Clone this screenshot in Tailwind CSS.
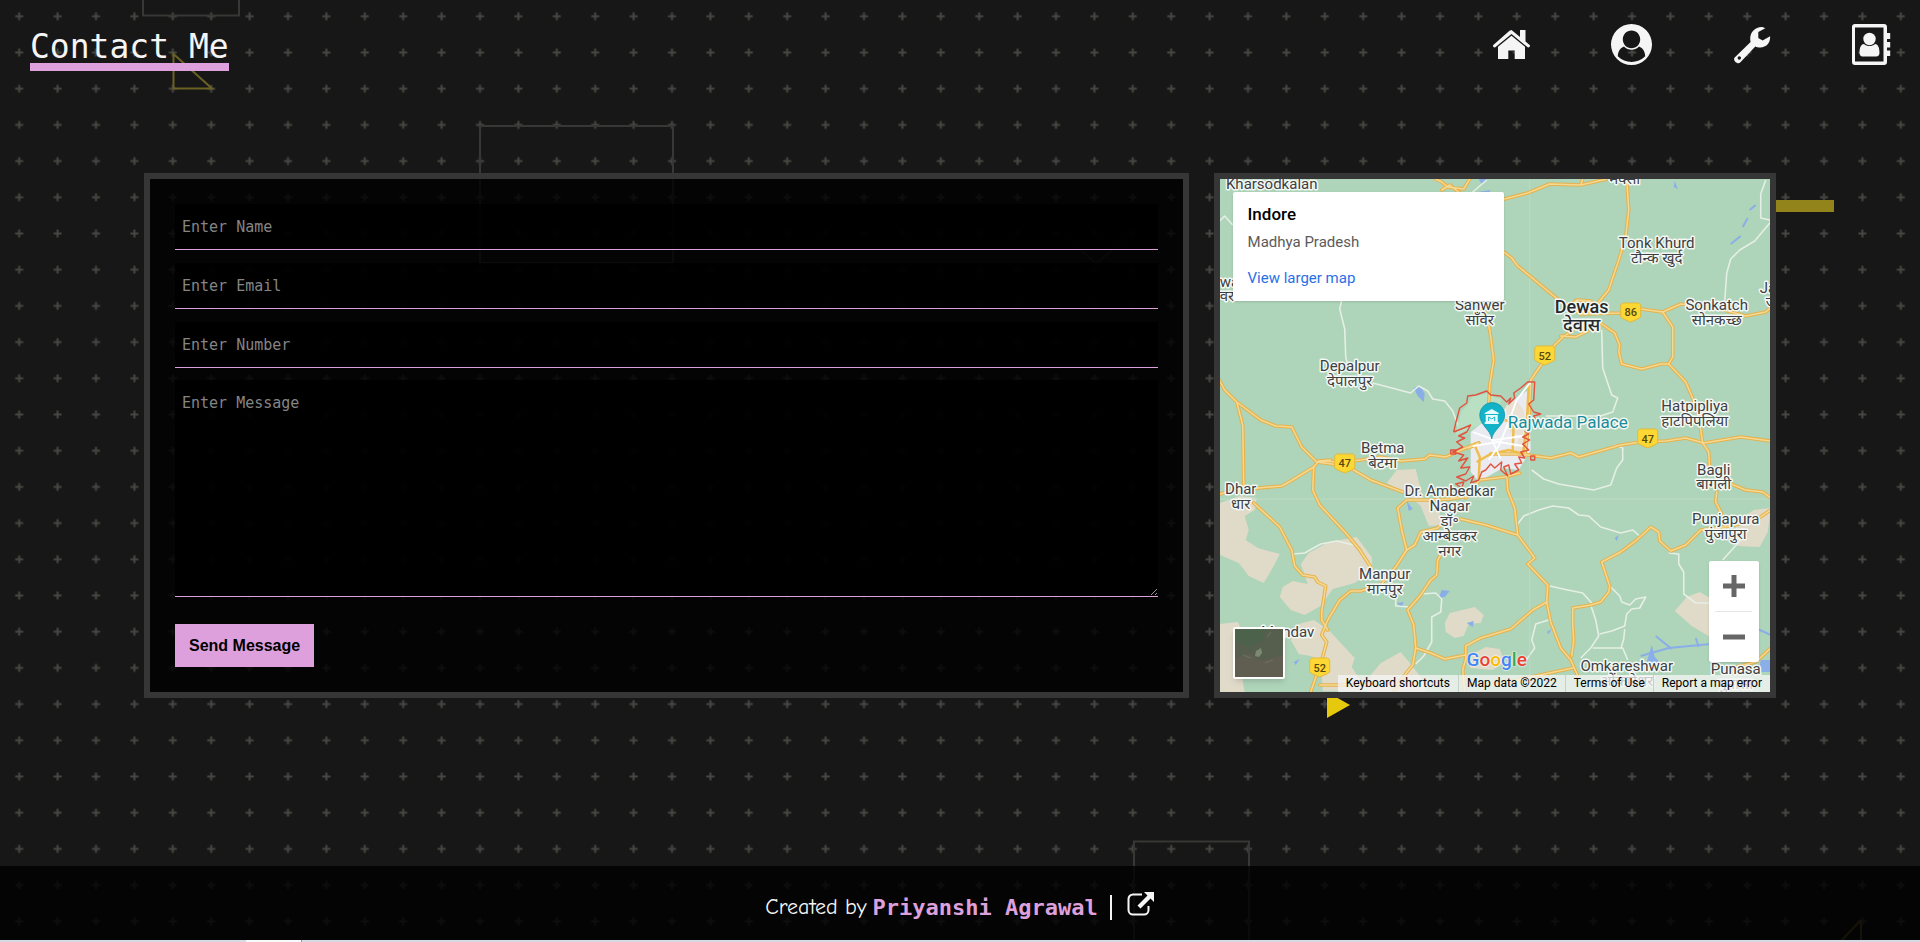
<!DOCTYPE html>
<html lang="en">
<head>
<meta charset="utf-8">
<meta name="viewport" content="width=device-width, initial-scale=1">
<title>Contact Me</title>
<script src="https://cdn.jsdelivr.net/npm/@tailwindcss/browser@4"></script>
</head>
<body class="relative flex min-h-screen flex-col overflow-x-hidden bg-[#171717] font-['DejaVu_Sans_Mono',monospace] text-[#f5f5f5]">

<!-- Page backdrop: plus grid with outlined shapes -->
<svg class="absolute inset-0 -z-10 h-full w-full" viewBox="0 0 1920 942" preserveAspectRatio="xMidYMid slice" aria-hidden="true">
  <defs>
    <pattern id="plus" x="0" y="-1.8" width="38.4" height="36.2" patternUnits="userSpaceOnUse">
      <path d="M15.2 18.1h8M19.2 14.1v8" stroke="#464642" stroke-width="2" fill="none"/>
    </pattern>
  </defs>
  <rect width="1920" height="942" fill="#171717"/>
  <rect width="1920" height="942" fill="url(#plus)"/>
  <g fill="none" stroke="#373735" stroke-width="2">
    <path d="M143 0v15.500h96V0"/>
    <path d="M480 263V126h193v137z"/>
    <path d="M1134 942V841.500h115V942"/>
    <path d="M1064 234l32 30 34-30" stroke="#2c2c2c"/>
  </g>
  <path d="M173.500 54v34.500H212z" fill="none" stroke="#6b6123" stroke-width="2"/>
  <path d="M1861 920v22M1861 920l-21 22" fill="none" stroke="#6b6123" stroke-width="2"/>
  <rect x="1700" y="200" width="134" height="12" fill="#93831b"/>
  <path d="M1327 692v26l23-13z" fill="#e6c90c"/>
</svg>

<header class="flex items-start justify-between pr-7 pl-[30px] pt-6">
  <h1 class="mt-[6px] border-b-8 border-[#dda0dd] text-[33px] leading-[33px]">Contact Me</h1>
  <nav class="flex h-[41px] items-center gap-[79px]" aria-label="Main">
    <a href="#home" aria-label="Home">
      <svg class="h-[41px] w-[41px]" viewBox="0 0 41 41" fill="#f5f5f5"><path d="M20.500 6 29 13V6h5.500v11.500l4.200 3.500c1 1-.8 3.200-2 2.300L20.500 10 4.300 23.300c-1.200.9-3-1.300-2-2.300L18.500 6.700z"/><path d="M20.500 11.700 34 22.800V35H23.700v-8.500h-6.400V35H7V22.800z"/></svg>
    </a>
    <a href="#about" aria-label="About">
      <svg class="h-[41px] w-[41px]" viewBox="0 0 41 41"><path fill="#f5f5f5" fill-rule="evenodd" d="M20.500 0a20.500 20.500 0 1 1 0 41 20.500 20.500 0 0 1 0-41zm0 6.500c-5 0-8.700 4-8.700 8.800 0 5 3.700 9 8.700 9s8.700-4 8.700-9c0-4.800-3.700-8.800-8.700-8.800zM13 22.500c-4 1.500-6 5-6.200 9.800C10.500 36 15.300 38 20.500 38s10-2 13.700-5.700c-.2-4.800-2.200-8.300-6.200-9.800-4 4.400-11 4.400-15 0z"/></svg>
    </a>
    <a href="#skills" aria-label="Skills">
      <svg class="h-[41px] w-[41px]" viewBox="0 0 41 41"><path fill="#f5f5f5" fill-rule="evenodd" d="M34.300 4.200 27.300 8v6l4.300 2.500 7.500-4.300c.5 6-3.300 11.200-9.800 11.200-2 0-3.600-.4-5-1L9.200 38.600c-2.600 2.600-8-2.300-5.500-5.200L19.600 18C17.500 9.500 24 2.200 32 3.200z"/><circle cx="8.300" cy="34" r="1.700" fill="#171717"/></svg>
    </a>
    <a href="#contact" aria-label="Contact">
      <svg class="h-[41px] w-[41px]" viewBox="0 0 41 41" fill="#f5f5f5"><path fill-rule="evenodd" d="M4 0h29a3 3 0 0 1 3 3v35a3 3 0 0 1-3 3H4a3 3 0 0 1-3-3V3a3 3 0 0 1 3-3zm0 3.400v34h28.500v-34zM36 9h3.200v6H36zM36 18h3.200v5.500H36zM36 26.500h3.200v5.500H36z"/><circle cx="18.500" cy="15" r="6.200"/><path d="M13 20c3 2.700 8 2.700 11 0 3.400.2 4.500 4.500 4.500 8.500 0 2.500-1 4-3.500 4H12c-2.500 0-3.500-1.500-3.500-4 0-4 1.100-8.300 4.500-8.500z"/></svg>
    </a>
  </nav>
</header>

<main class="mx-auto mt-[102px] grid w-[85%] grid-cols-[65fr_35fr] gap-[25px]">
  <form class="flex min-w-0 flex-col items-start border-6 border-[#363636] bg-black/80 p-[25px]">
    <input type="text" aria-label="Name" placeholder="Enter Name" class="mb-[13px] h-[46px] w-full border-b border-[#dda0dd] bg-black/80 px-[7px] text-[15px] placeholder:text-[#858585]">
    <input type="email" aria-label="Email" placeholder="Enter Email" class="mb-[13px] h-[46px] w-full border-b border-[#dda0dd] bg-black/80 px-[7px] text-[15px] placeholder:text-[#858585]">
    <input type="tel" aria-label="Number" placeholder="Enter Number" class="mb-3 h-[46px] w-full border-b border-[#dda0dd] bg-black/80 px-[7px] text-[15px] placeholder:text-[#858585]">
    <textarea aria-label="Message" placeholder="Enter Message" class="h-[217px] w-full resize border-b border-[#dda0dd] bg-black/80 px-[7px] py-[13px] text-[15px] leading-5 placeholder:text-[#858585]"></textarea>
    <button type="submit" class="mt-[27px] h-[43px] bg-[#dda0dd] px-3.5 font-['Liberation_Sans',sans-serif] text-base font-bold text-black">Send Message</button>
  </form>

  <section class="relative min-w-0 overflow-hidden border-6 border-[#363636] bg-[#aed4b9] font-[Roboto,sans-serif]" aria-label="Map of Indore">
    <svg class="absolute inset-0 h-full w-full" viewBox="1219 179 551 513" preserveAspectRatio="xMidYMid slice">
      <rect x="1219" y="179" width="551" height="513" fill="#aed4b9"/>
      <!-- Bare land -->
      <g fill="#e0dac9">
        <path d="M1219 503l20-7 17 2-2 12-10 6 4 14-3 10 12 8 22 6-6 12-10 17-15-7-10-13-19-8z"/>
        <path d="M1300 564l8-11 20-11 28-5 15 20 1 14-18 12-22 6-12 17-16 9-14-5-11-13 3-10 10-6 15 3z"/>
        <path d="M1219 624l18-2 4 8-3 30 6 32h-25zM1290 640l8-16 15-4 15 10 26 28-3 9 8 12 8 12h-45l-2-30-10-5-12-2z"/>
        <path d="M1386 483l10-13 19-1 7 28 15 10 6 18-15 1-8-20-14-12z"/>
        <path d="M1444 623l5-10 25-6 9 8-3 8-12 1-5 12-9 2-9-6z"/>
        <path d="M1370 675l10-12 20-11 10 12 10 13 6 15h-60z"/>
        <path d="M1470 655l15-8 14 2 5 13-12 8-23-2z"/>
        <path d="M1674 611l12-14 13-5 12 7v39l-20-12z"/>
        <path d="M1738 520l15-10 17-2-3 24-8 15-22-1-5-12z"/>
      </g>
      <!-- Water -->
      <g fill="#8aaee8" stroke="none">
        <path d="M1413 388l7-2 4 8-1 8-6-6zM1478 179h8l-5 5zM1477 192l13-2-4 6zM1406 501l6 8-4 2zM1438 598l3-8 8 1-5 6zM1396 603l7-1-2 5zM1466 623l7-2-1 6zM1293 662l6-3-4 6zM1614 538l4-3-2 6zM1546 632l5-3-3 5zM1674 181l3 8-4-2zM1760 660h10v12h-12zM1646 662l5-17 3 12 8 8z"/>
        <path d="M1640 656l28-8 42-4M1655 636l16 13M1695 638l3 9M1757 629l13 6M1730 244l10-8M1742 227l5-9M1749 210l6-5" fill="none" stroke="#8aaee8" stroke-width="2"/>
      </g>
      <!-- Minor roads -->
      <g fill="none" stroke="#e6efe5" stroke-width="1.600" stroke-linejoin="round">
        <path d="M1219 221l5-5 8 9M1341 300l-2 9 5 20 1 28 3 12M1372 383l38 10 8-7 9 5 5 8 12 2 8 10 8 22"/>
        <path d="M1464 199l22-19"/>
        <path d="M1765 180l-5 14v24l9 2 1 2-16 19-15 9-9 9-4 14-2 28"/>
        <path d="M1601 330l1 38 9 27 6 3-5 14-12 4h-55M1531 470l12 9 15 5 35 6 17-5 6-17 6-8v-12l-8-3"/>
        <path d="M1517 524l6-8 15-6 14-4 16 2 10 7 10 1 12 11 20 6 12-3 8 7"/>
        <path d="M1293 554l11-1 16-9 16-3 21 5M1395 592v14l14 1M1421 594l14-1 6 6-1 13-9 5v25l-8 14-8 8"/>
        <path d="M1549 586l18 4 15 3 9 10M1610 587l9 9 2 6 8 3 6-6 10-2-6 11-8 1-5 5-2 12-13 5-12 3M1590 605l5 15 3 16-8 12-10 10M1592 648h30l5 12M1624 629l-1 10-3 10M1668 553l10 1v10l5 8v22l12 9h15M1740 540l-18 20M1548 620l-13 4-4 16 3 8-10 14"/>
      </g>
      <path d="M1529 179v513M1219 499h551" stroke="#bcdcc4" fill="none"/>
      <!-- City area -->
      <path d="M1470 432l10-8 16-4 10-14 12-10 10-6 2 60-6 10-6 10-16-2-14 8-10 6-8-10z" fill="#e9ebf1"/>
      <path d="M1505 406l10-6 8 10 2 16-4 10-12-4zM1518 438l8 2-4 14-8-4z" fill="#e9e1d3"/>
      <path d="M1457 425l4-14 6-6 4-8 16-4 6 4 8 2-6 16-20 12-20 8z" fill="#b9e0c3"/>
      <!-- Highways: dark casing below a pale core -->
      <defs>
        <g id="roads" fill="none" stroke-linejoin="round" stroke-linecap="round">
          <path d="M1435 179l6 3 6 5 16 2 6-10M1441 190l8-5 10 8M1500 200l27-7 22-9 31 1 26-6M1580 185l2-6"/>
          <path d="M1626 179l2 31-3 27-7 23-10 30-10 12-14 12M1578 326l-16 11-12 12-7 12-13 19-1 22-1 24-4 30"/>
          <path d="M1503 252l8 6 6 8 23 19 18 15 22 14M1566 308l10-8 14 1 10 9M1560 336l15 1 12-6"/>
          <path d="M1580 314l40-1 20-4 22 3 18-8 36 4 29 8 20-4 5-4M1662 312l10 15v30l-4 7 17 18 12 28 5 33 6 9 1 18M1716 492l-1 10 6 12"/>
          <path d="M1598 322l16 11 5 12-1 6 3 13 20 5 19-5h8M1482 304l7 26 4 30-4 25-1 20"/>
          <path d="M1219 381l5 9 12 12 24 18 15 6 16 1 10 20 15 15 30 4 24 14 32 12M1236 402l6 23 1 60"/>
          <path d="M1219 494l16-4 46-4 9-5 23-14 5-6 22 1 20-2 20-3 20 4 24-2 5-4 16 2 15-7 18-7M1318 461l12-1"/>
          <path d="M1313 467l-1 23 7 15 26 28 14 17 11 17M1253 503l26 24 12 23 3 16 8 9 12 2 3 5 8 4-4 26v8l6 10"/>
          <path d="M1490 492l-40 7-20 1-24 0-9 8 4 22 5 20-11 17-15 18-20 6h-10l-11 9-12 20-6 15 5 7-5 18-11 32"/>
          <path d="M1406 550l8-5 6-13 17-4 8-8M1443 550l-6 10-1 15-6 5-10 15-13 15 6 15 2 23-3 17-12 15-7 12M1415 648l15 5 14 6 21-4"/>
          <path d="M1460 519l25 6 32 10M1506 475l1 15 7 18 3 27 17 23-7 6 20 21-1 17 4 20 10 26 10 12 8 18M1546 602l-14 8-22 19-30 9-15 8v13l-3 11 2 22M1319 685h60M1470 684h30l30-7 42-9"/>
          <path d="M1478 443l-10 5M1490 454l30 0 30 4 20-5 8 4 42-12 20-3 25-1 20-3 18 5 37-6 30 4M1465 498l14-18 25-3 15-4"/>
          <path d="M1770 510l-15 10-25 6-30 4-15 15-15 6-11-10-1-9-8-5-14 13-16 12-19 10 8 24-1 6-8 10-10 3-18 3v17l1 15-2 16M1728 483l17 7 17 2 8 6M1735 667l20-5 15-14"/>
        </g>
      </defs>
      <use href="#roads" stroke="#e5b24d" stroke-width="3.600"/>
      <use href="#roads" stroke="#f5d992" stroke-width="1.500"/>
      <g fill="none" stroke="#f0bd4b" stroke-width="2.500">
        <path d="M1528 385l-2 40-4 30M1473 443l6 14-1 22M1476 462l14-8 18-4 15 4M1504 420l9 3-1 28"/>
      </g>
      <g fill="none" stroke="#fff" stroke-width="1.800">
        <path d="M1530 382l-14 18-8 22-10 24-10 14M1472 432l22 8 28-4M1490 437l10 22M1472 446l26-4 24 4"/>
      </g>
      <!-- Municipal boundary -->
      <g fill="none" stroke="#e0533f" stroke-width="1.400" stroke-linejoin="round">
        <path d="M1453 432L1455 423L1459 408L1466 403L1467 396L1475 395L1486 391L1490 395L1500 396L1506 402L1510 398L1508 404L1514 398L1513 393L1520 388L1527 382L1534 382L1533 400L1528 404L1533 412L1540 414L1533 416L1536 421L1529 420"/>
        <path d="M1453 432L1463 428L1470 425L1466 432L1458 436L1464 438L1456 442L1462 447L1452 452L1463 455L1458 461L1467 458L1460 468L1469 467L1465 474L1456 477L1465 481L1473 476L1470 483L1478 480L1481 472L1485 470L1490 464L1494 468L1501 462L1500 470L1507 476L1503 467L1508 465L1510 474L1518 470L1514 464L1521 463L1518 457L1524 458L1520 452L1528 450L1522 444L1529 440L1522 437L1528 434L1524 431"/>
        <path d="M1450 450h5v4h-5zM1530 456h4v4h-4zM1455 484l8-2-2 6z"/>
      </g>
      <!-- Highway shields -->
      <g font-family="Roboto, sans-serif" font-size="11" font-weight="500" text-anchor="middle" fill="#57480d">
        <g fill="#fdd835" stroke="#e2b93c">
          <path d="M1336 454h16l2 2v12l-3 2-7 3-7-3-3-2v-12z"/>
          <path d="M1536 346h16l2 2v12l-3 2-7 3-7-3-3-2v-12z"/>
          <path d="M1622 303h16l2 2v12l-3 2-7 3-7-3-3-2v-12z"/>
          <path d="M1639 429h16l2 2v12l-3 2-7 3-7-3-3-2v-12z"/>
          <path d="M1311 658h16l2 2v12l-3 2-7 3-7-3-3-2v-12z"/>
        </g>
        <text x="1344" y="467">47</text><text x="1544" y="360">52</text><text x="1630" y="316">86</text><text x="1647" y="443">47</text><text x="1319" y="672">52</text>
      </g>
      <!-- Place names -->
      <g font-family="Roboto, 'Noto Sans Devanagari', 'Noto Sans', sans-serif" font-size="15" text-anchor="middle" fill="#3c4043" stroke="#f4f8f4" stroke-width="3" stroke-linejoin="round" paint-order="stroke">
        <text x="1271" y="189">Kharsodkalan</text>
        <text x="1624" y="184">मक्सी</text>
        <text x="1349" y="371">Depalpur</text><text x="1349" y="386">देपालपुर</text>
        <text x="1479" y="310">Sanwer</text><text x="1479" y="325">साँवेर</text>
        <text x="1656" y="248">Tonk Khurd</text><text x="1656" y="263">टौन्क खुर्द</text>
        <text x="1716" y="310">Sonkatch</text><text x="1716" y="325">सोनकच्छ</text>
        <text x="1694" y="411">Hatpipliya</text><text x="1694" y="426">हाटपिपलिया</text>
        <text x="1713" y="475">Bagli</text><text x="1713" y="489">बागली</text>
        <text x="1725" y="524">Punjapura</text><text x="1725" y="539">पुंजापुरा</text>
        <text x="1626" y="671">Omkareshwar</text><text x="1626" y="686">ओंकारेश्वर</text>
        <text x="1735" y="674">Punasa</text><text x="1735" y="689">पुनासा</text>
        <text x="1382" y="453">Betma</text><text x="1382" y="468">बेटमा</text>
        <text x="1240" y="494">Dhar</text><text x="1240" y="509">धार</text>
        <text x="1449" y="496">Dr. Ambedkar</text><text x="1449" y="511">Nagar</text><text x="1449" y="526">डॉ॰</text><text x="1449" y="541">आम्बेडकर</text><text x="1449" y="556">नगर</text>
        <text x="1384" y="579">Manpur</text><text x="1384" y="594">मानपुर</text>
        <text x="1287" y="637">Mandav</text>
        <g text-anchor="start"><text x="1759" y="293">Jawar</text><text x="1765" y="307">जावर</text><text x="1219" y="287">wa</text><text x="1219" y="301">वर</text></g>
        <g font-size="18" font-weight="500" fill="#26292b"><text x="1581" y="313">Dewas</text><text x="1581" y="331">देवास</text></g>
        <text x="1507" y="428" font-size="17" text-anchor="start" fill="#1b8c9b">Rajwada Palace</text>
      </g>
      <!-- Landmark pin -->
      <path d="M1491 439c-1-9-12-14-12-24a12.500 12.500 0 0 1 25 0c0 10-12 15-13 24z" fill="#12b2c9" stroke="#0f8fa3" stroke-width=".7"/>
      <path d="M1491 409l7 4v1h-14v-1zM1485 415h12v7h-12zM1484 422h14v2h-14z" fill="#e4fafd"/>
      <path d="M1488 421v-4l3 2 3-2v4" fill="none" stroke="#12b2c9"/>
    </svg>

    <div class="absolute top-[13px] left-[13px] w-[271px] rounded-xs bg-white px-[15px] pt-[11px] pb-[13px] shadow">
      <h2 class="text-[17px] leading-[22px] font-medium text-black">Indore</h2>
      <p class="mt-[7px] text-[15px] leading-5 text-[#5b5b5b]">Madhya Pradesh</p>
      <a href="#map" class="mt-4 block text-[15px] leading-5 text-[#2a6fe8]">View larger map</a>
    </div>

    <button type="button" aria-label="Show satellite imagery" class="absolute bottom-[13px] left-[13px] h-[52px] w-[52px] overflow-hidden rounded-xs border-2 border-white bg-[#565f4d] shadow-md">
      <svg class="h-full w-full" viewBox="0 0 48 48"><path d="M0 0h32l-6 12-12 6L0 12z" fill="#4c624b"/><path d="M0 30l14-6 12 8 22-6v22H0z" fill="#605e50"/><path d="M21 22l5-3 1 5-3 4-4-1z" fill="#7d8873"/><path d="M32 8l4-5M8 26l8 3M30 34l8-3" stroke="#6d7262" fill="none"/></svg>
    </button>

    <div class="absolute right-[11px] bottom-[30px] flex w-[50px] flex-col items-center rounded-xs bg-white shadow">
      <button type="button" aria-label="Zoom in" class="flex h-[50px] w-full items-center justify-center"><svg class="h-[22px] w-[22px]" viewBox="0 0 22 22"><path d="M8.500 0h5v8.500H22v5h-8.500V22h-5v-8.500H0v-5h8.500z" fill="#666"/></svg></button>
      <span class="h-px w-[37px] bg-[#e6e6e6]"></span>
      <button type="button" aria-label="Zoom out" class="flex h-[50px] w-full items-center justify-center"><svg class="h-[22px] w-[22px]" viewBox="0 0 22 22"><path d="M0 8.500h22v5H0z" fill="#666"/></svg></button>
    </div>

    <div class="absolute bottom-5 left-[247px] text-[19px] leading-6 font-medium [text-shadow:0_0_2px_#fff,0_0_2px_#fff]" aria-label="Google"><span class="text-[#4285f4]">G</span><span class="text-[#ea4335]">o</span><span class="text-[#fbbc04]">o</span><span class="text-[#4285f4]">g</span><span class="text-[#34a853]">l</span><span class="text-[#ea4335]">e</span></div>

    <div class="absolute right-0 bottom-0 flex h-[17px] divide-x divide-[#c4d2c8] bg-[#f5f5f5]/75 text-xs leading-[17px] whitespace-nowrap text-black">
      <button type="button" class="px-2">Keyboard shortcuts</button>
      <span class="px-2">Map data ©2022</span>
      <a href="#terms" class="px-2">Terms of Use</a>
      <a href="#report" class="px-2">Report a map error</a>
    </div>
  </section>
</main>

<footer class="mt-auto">
  <div class="flex h-[74px] items-center justify-center bg-black/80 pt-2">
    <p class="font-['Comic_Sans_MS','Comic_Neue','Noto_Sans',cursive] text-[22px]">Created by</p>
    <a href="#author" class="ml-[6px] text-[22px] font-bold text-[#dda0dd]">Priyanshi Agrawal</a>
    <span class="mx-3 h-[25px] w-[2px] bg-[#f5f5f5]"></span>
    <a href="#source" aria-label="Open project" class="ml-[3px] pb-[6px]">
      <svg class="h-[26px] w-[28px]" viewBox="0 0 28 26"><path d="M15 3.500H6A4.500 4.500 0 0 0 1.500 8v11A4.500 4.500 0 0 0 6 23.500h11a4.500 4.500 0 0 0 4.500-4.500v-4" fill="none" stroke="#f5f5f5" stroke-width="2"/><path d="M17 1h10v10l-3.500-3.500L13.500 17.500 10.500 14.500 20.500 4.500z" fill="#f5f5f5"/></svg>
    </a>
  </div>
  <div class="flex h-[2px] bg-[#d5dae5]"><span class="ml-[246px] w-[56px] border-r border-[#999] bg-[#f7f8fa]"></span></div>
</footer>
</body>
</html>
